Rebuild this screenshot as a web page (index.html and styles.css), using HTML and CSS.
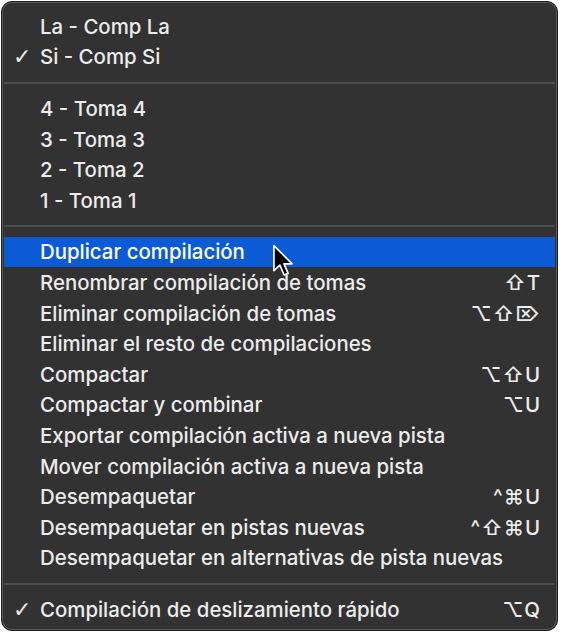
FILE: index.html
```html
<!DOCTYPE html>
<html lang="es">
<head>
<meta charset="utf-8">
<title>Menú de compilaciones</title>
<link rel="stylesheet" href="styles.css">
</head>
<body>
<div class="menu">
  <div class="group">
    <div class="item"><span class="check"></span><span class="label">La - Comp La</span><span class="key"></span></div>
    <div class="item"><span class="check">✓</span><span class="label">Si - Comp Si</span><span class="key"></span></div>
  </div>
  <div class="sep"></div>
  <div class="group">
    <div class="item"><span class="check"></span><span class="label">4 - Toma 4</span><span class="key"></span></div>
    <div class="item"><span class="check"></span><span class="label">3 - Toma 3</span><span class="key"></span></div>
    <div class="item"><span class="check"></span><span class="label">2 - Toma 2</span><span class="key"></span></div>
    <div class="item"><span class="check"></span><span class="label">1 - Toma 1</span><span class="key"></span></div>
  </div>
  <div class="sep"></div>
  <div class="group">
    <div class="item selected"><span class="check"></span><span class="label">Duplicar compilación</span><span class="key"></span>
      <svg class="cursor" width="22" height="33" viewBox="0 0 13 20"><path d="M1 1 L1 16.2 L4.6 12.8 L7.2 18.8 L9.6 17.8 L7.1 12 L12 12 Z" fill="#000" stroke="#fff" stroke-width="1" stroke-linejoin="round"/></svg>
    </div>
    <div class="item"><span class="check"></span><span class="label">Renombrar compilación de tomas</span><span class="key">⇧T</span></div>
    <div class="item"><span class="check"></span><span class="label">Eliminar compilación de tomas</span><span class="key">⌥⇧⌦</span></div>
    <div class="item"><span class="check"></span><span class="label">Eliminar el resto de compilaciones</span><span class="key"></span></div>
    <div class="item"><span class="check"></span><span class="label">Compactar</span><span class="key">⌥⇧U</span></div>
    <div class="item"><span class="check"></span><span class="label">Compactar y combinar</span><span class="key">⌥U</span></div>
    <div class="item"><span class="check"></span><span class="label">Exportar compilación activa a nueva pista</span><span class="key"></span></div>
    <div class="item"><span class="check"></span><span class="label">Mover compilación activa a nueva pista</span><span class="key"></span></div>
    <div class="item"><span class="check"></span><span class="label">Desempaquetar</span><span class="key">^⌘U</span></div>
    <div class="item"><span class="check"></span><span class="label">Desempaquetar en pistas nuevas</span><span class="key">^⇧⌘U</span></div>
    <div class="item"><span class="check"></span><span class="label">Desempaquetar en alternativas de pista nuevas</span><span class="key"></span></div>
  </div>
  <div class="sep"></div>
  <div class="group">
    <div class="item"><span class="check">✓</span><span class="label">Compilación de deslizamiento rápido</span><span class="key">⌥Q</span></div>
  </div>
</div>
</body>
</html>
```

FILE: styles.css
```css
html, body {
  margin: 0;
  padding: 0;
  background: #ffffff;
}
body {
  width: 561px;
  height: 633px;
  font-family: Inter, "Noto Sans", "DejaVu Sans", sans-serif;
}
.menu {
  box-sizing: border-box;
  margin: 1px 0 0 1px;
  width: 557px;
  height: 630px;
  background: #323232;
  border: 1px solid #1c1c1c;
  box-shadow: inset 0 0 0 1px #5a5a5a;
  border-radius: 11px;
  padding: 9px 2px 0 2px;
  color: #ececec;
  font-size: 20.4px;
  font-weight: 500;
  overflow: hidden;
}
.group {
  display: flex;
  flex-direction: column;
}
.item {
  position: relative;
  display: flex;
  align-items: center;
  height: 30.6px;
  padding: 0 14px 0 10px;
  white-space: nowrap;
}
.item.selected {
  background: #0b5bd7;
  color: #ffffff;
}
.check {
  width: 26px;
  flex: none;
  font-family: "DejaVu Sans", sans-serif;
  font-size: 22px;
  margin-left: -1px;
  margin-right: 1px;
}
.label {
  flex: 1;
}
.key {
  flex: none;
  letter-spacing: 1px;
  font-family: Inter, "DejaVu Sans", sans-serif;
}
.sep {
  height: 2px;
  background: #4d4d4d;
  margin: 9.5px 0;
}
.cursor {
  position: absolute;
  left: 268px;
  top: 7px;
}
```
